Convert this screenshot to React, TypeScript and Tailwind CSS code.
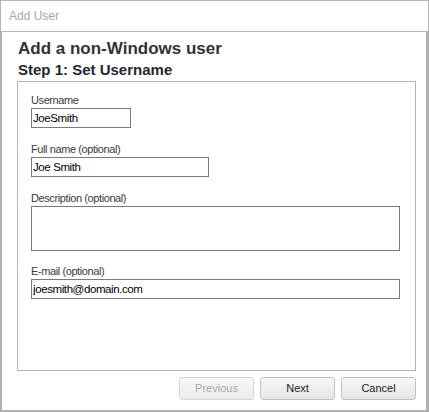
/**
 * Asistente "Add User": paso 1, nombre de usuario.
 */
const labelCls =
  "block h-[15px] text-[11px] leading-[14px] tracking-[-0.4px] text-[#3a3a3a] font-['Liberation_Sans',sans-serif]";
const inputCls =
  "block h-[20px] border border-[#7a7a7a] bg-white px-[1px] text-[11.5px] leading-[18px] tracking-[-0.4px] text-black outline-none font-['Liberation_Sans',sans-serif]";

function Field({ label, value, width }: { label: string; value: string; width: string }) {
  return (
    <div>
      <label className={labelCls}>{label}</label>
      <input readOnly value={value} className={`${inputCls} ${width}`} />
    </div>
  );
}

function WizardButton({ children, disabled }: { children: string; disabled?: boolean }) {
  return (
    <button
      type="button"
      disabled={disabled}
      className={
        disabled
          ? "w-[75px] h-[23px] rounded-[3px] border border-[#d6d6d6] bg-gradient-to-b from-[#f7f7f7] to-[#ececec] text-[11px] text-[#a8a8a8] font-['Liberation_Sans',sans-serif]"
          : "w-[75px] h-[23px] rounded-[3px] border border-[#c2c2c2] bg-gradient-to-b from-[#f7f7f7] to-[#e6e6e6] text-[11px] text-[#222] font-['Liberation_Sans',sans-serif]"
      }
    >
      {children}
    </button>
  );
}

export default function App() {
  return (
    <div className="w-[429px] h-[412px] flex flex-col bg-white font-['Liberation_Sans',sans-serif]">
      <div className="h-[32px] shrink-0 flex items-center pl-[8px] border border-[#b4b4b4] text-[12px] text-[#a6a6a6]">
        Add User
      </div>
      <div className="flex-1 flex flex-col border-l-2 border-r-[3px] border-b-2 border-[#b0b0b0] pt-[7px] pl-[15px] pr-[10px] pb-[10px]">
        <h1 className="ml-[1px] text-[17px] leading-[20px] font-bold text-[#333]">Add a non-Windows user</h1>
        <h2 className="ml-[1px] mt-[2px] text-[15px] leading-[18px] font-bold text-[#23272e]">Step 1: Set Username</h2>
        <div className="mt-[2px] flex-1 border border-[#b5b5b5] pt-[11px] pl-[13px] flex flex-col gap-[14px]">
          <Field label="Username" value="JoeSmith" width="w-[100px]" />
          <Field label="Full name (optional)" value="Joe Smith" width="w-[178px]" />
          <div>
            <label className={labelCls}>Description (optional)</label>
            <textarea readOnly className="block w-[369px] h-[45px] border border-[#7a7a7a] resize-none outline-none" />
          </div>
          <div className="-mt-[1px]">
            <label className={labelCls}>E-mail (optional)</label>
            <input readOnly value="joesmith@domain.com" className={`${inputCls} w-[369px]`} />
          </div>
        </div>
        <div className="mt-[6px] flex justify-end gap-[6px]">
          <WizardButton disabled>Previous</WizardButton>
          <WizardButton>Next</WizardButton>
          <WizardButton>Cancel</WizardButton>
        </div>
      </div>
    </div>
  );
}
